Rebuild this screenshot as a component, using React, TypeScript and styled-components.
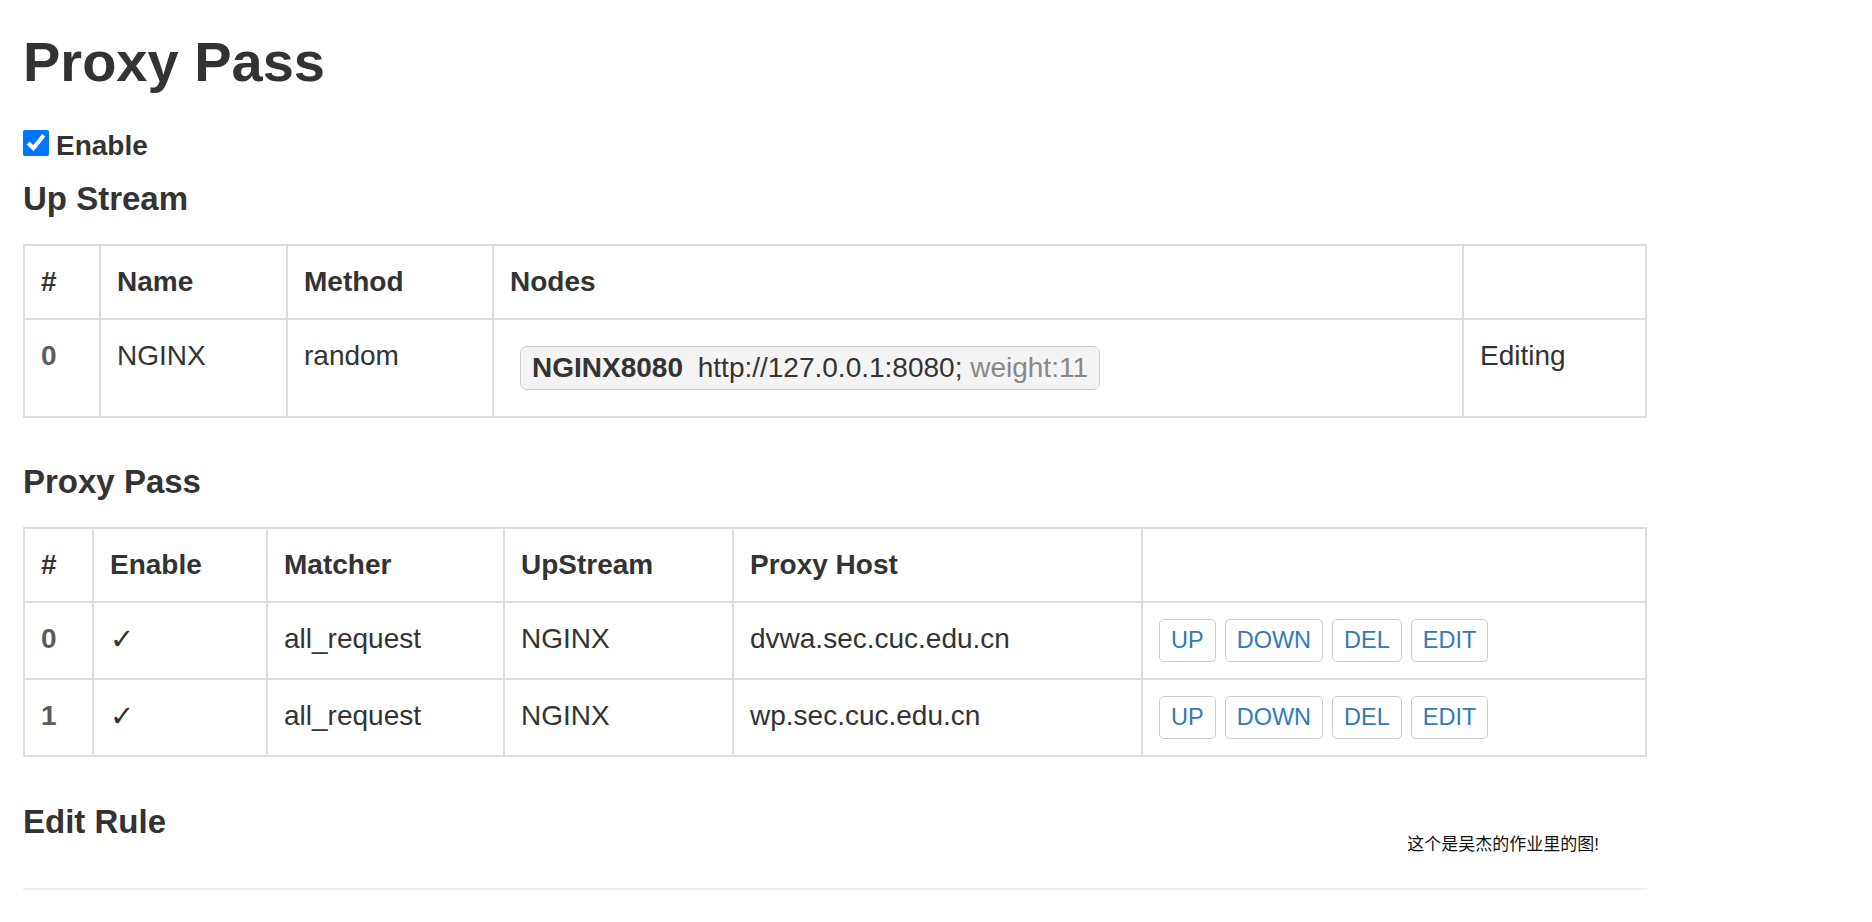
import React from "react";
import styled, { createGlobalStyle } from "styled-components";

const GlobalStyle = createGlobalStyle`
  html, body {
    margin: 0;
    padding: 0;
    background: #ffffff;
  }
  body {
    font-family: "Liberation Sans", Arial, sans-serif;
    color: #333333;
  }
`;

const Page = styled.div`
  width: 1624px;
  padding-left: 23px;
  padding-bottom: 20px;
`;

const Title = styled.h1`
  margin: 30px 0 34px;
  font-size: 56px;
  line-height: 63px;
  font-weight: 700;
  color: #333;
`;

const EnableRow = styled.label`
  display: flex;
  align-items: flex-start;
  gap: 7px;
  font-size: 28px;
  line-height: 38px;
  font-weight: 700;
  color: #333;
`;

const Check = styled.input`
  width: 26px;
  height: 26px;
  margin: 3px 0 0 0;
  flex: none;
`;

const SectionTitle = styled.h3<{ $top: number }>`
  margin: ${(p) => p.$top}px 0 0;
  font-size: 33px;
  line-height: 36px;
  font-weight: 700;
  color: #333;
`;

const Table = styled.table`
  box-sizing: border-box;
  width: 1624px;
  margin-top: 27px;
  table-layout: fixed;
  border-collapse: separate;
  border-spacing: 0;
  border-top: 2px solid #dddddd;
  border-left: 2px solid #dddddd;
  font-size: 28px;
  line-height: 40px;
`;

const Cell = styled.td<{ $w?: number; $head?: boolean; $index?: boolean }>`
  box-sizing: border-box;
  width: ${(p) => (p.$w ? `${p.$w}px` : "auto")};
  padding: 16px;
  border-right: 2px solid #dddddd;
  border-bottom: 2px solid #dddddd;
  vertical-align: top;
  text-align: left;
  white-space: nowrap;
  font-weight: ${(p) => (p.$head || p.$index ? 700 : 400)};
  color: ${(p) => (p.$index ? "#5c5c5c" : "#333")};
`;

const NodeTag = styled.span`
  display: inline-block;
  vertical-align: top;
  box-sizing: border-box;
  height: 44px;
  margin: 10px 0 10px 10px;
  padding: 0 11px;
  border: 1px solid #cccccc;
  border-radius: 7px;
  background: #f4f4f4;
  line-height: 42px;
  white-space: nowrap;
`;

const NodeName = styled.b`
  margin-right: 7px;
`;

const NodeWeight = styled.span`
  color: #888888;
`;

const CheckMark = styled.span`
  display: inline-block;
  vertical-align: top;
  font-family: "DejaVu Sans", sans-serif;
  font-size: 29px;
  line-height: 40px;
  color: #333;
`;

const Actions = styled.div`
  display: flex;
  gap: 9px;
`;

const ActionButton = styled.button`
  box-sizing: border-box;
  height: 43px;
  padding: 0 11px;
  border: 1px solid #cccccc;
  border-radius: 5px;
  background: #ffffff;
  color: #337ab7;
  font-family: "Liberation Sans", Arial, sans-serif;
  font-size: 23.5px;
  line-height: 41px;
  cursor: pointer;
`;

const EditRow = styled.div`
  display: flex;
  justify-content: space-between;
  align-items: flex-start;
  margin-top: 47px;
`;

const EditTitle = styled.h3`
  margin: 0;
  font-size: 33px;
  line-height: 36px;
  font-weight: 700;
  color: #333;
`;

const Note = styled.span`
  margin: 29px 48px 0 0;
  font-family: "Liberation Sans", "Noto Sans CJK SC", sans-serif;
  font-size: 17px;
  line-height: 24px;
  color: #111;
`;

const Rule = styled.div`
  margin-top: 31px;
  border-top: 2px solid #eeeeee;
`;

const upstreamCols = [76, 187, 206, 970, 183];
const proxyCols = [69, 174, 237, 229, 409, 504];

const rules = [
  { id: 0, matcher: "all_request", upstream: "NGINX", host: "dvwa.sec.cuc.edu.cn" },
  { id: 1, matcher: "all_request", upstream: "NGINX", host: "wp.sec.cuc.edu.cn" },
];

export default function App() {
  return (
    <>
      <GlobalStyle />
      <Page>
        <Title>Proxy Pass</Title>
        <EnableRow>
          <Check type="checkbox" defaultChecked />
          Enable
        </EnableRow>

        <SectionTitle $top={16}>Up Stream</SectionTitle>
        <Table>
          <thead>
            <tr>
              {["#", "Name", "Method", "Nodes", ""].map((h, i) => (
                <Cell as="th" key={i} $w={upstreamCols[i]} $head>
                  {h}
                </Cell>
              ))}
            </tr>
          </thead>
          <tbody>
            <tr>
              <Cell $index>0</Cell>
              <Cell>NGINX</Cell>
              <Cell>random</Cell>
              <Cell>
                <NodeTag>
                  <NodeName>NGINX8080</NodeName> http://127.0.0.1:8080;{" "}
                  <NodeWeight>weight:11</NodeWeight>
                </NodeTag>
              </Cell>
              <Cell>Editing</Cell>
            </tr>
          </tbody>
        </Table>

        <SectionTitle $top={46}>Proxy Pass</SectionTitle>
        <Table>
          <thead>
            <tr>
              {["#", "Enable", "Matcher", "UpStream", "Proxy Host", ""].map((h, i) => (
                <Cell as="th" key={i} $w={proxyCols[i]} $head>
                  {h}
                </Cell>
              ))}
            </tr>
          </thead>
          <tbody>
            {rules.map((r) => (
              <tr key={r.id}>
                <Cell $index>{r.id}</Cell>
                <Cell>
                  <CheckMark>✓</CheckMark>
                </Cell>
                <Cell>{r.matcher}</Cell>
                <Cell>{r.upstream}</Cell>
                <Cell>{r.host}</Cell>
                <Cell>
                  <Actions>
                    <ActionButton>UP</ActionButton>
                    <ActionButton>DOWN</ActionButton>
                    <ActionButton>DEL</ActionButton>
                    <ActionButton>EDIT</ActionButton>
                  </Actions>
                </Cell>
              </tr>
            ))}
          </tbody>
        </Table>

        <EditRow>
          <EditTitle>Edit Rule</EditTitle>
          <Note>这个是吴杰的作业里的图!</Note>
        </EditRow>
        <Rule />
      </Page>
    </>
  );
}
